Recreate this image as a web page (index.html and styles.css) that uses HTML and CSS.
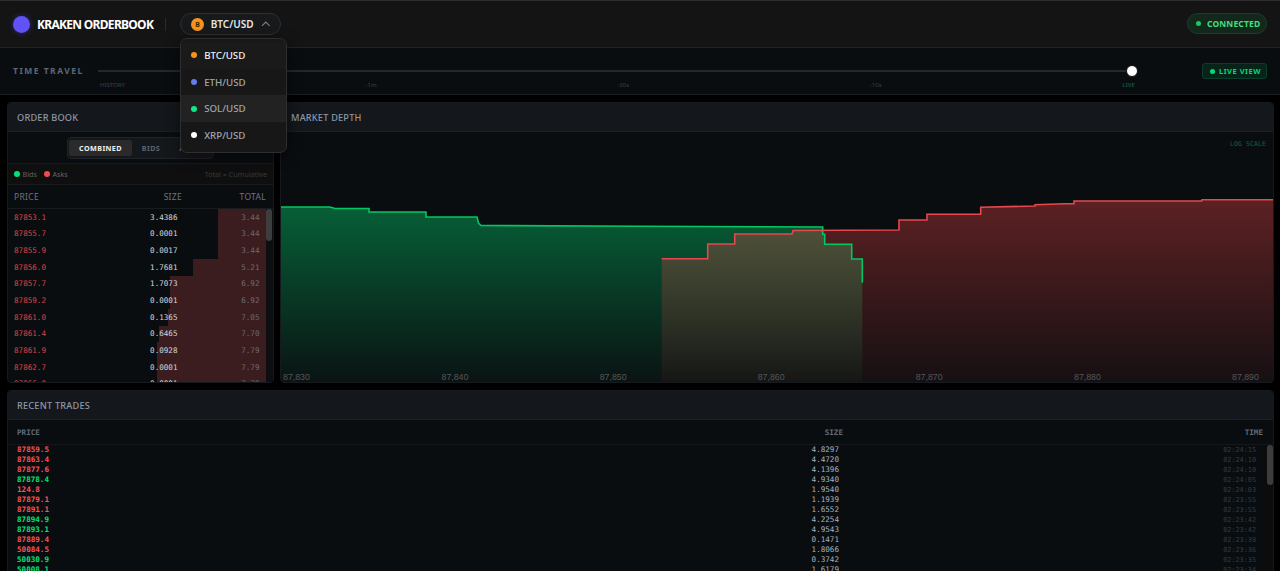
FILE: index.html
```html
<!DOCTYPE html>
<html lang="en">
<head>
<meta charset="utf-8">
<title>Kraken Orderbook</title>
<link rel="stylesheet" href="styles.css">
</head>
<body>
<header class="topbar">
  <div class="logo"></div>
  <div class="brand">KRAKEN ORDERBOOK</div>
  <div class="sep"></div>
  <div class="pair-wrap">
    <button class="pair">
      <span class="coin">B</span>
      <span class="pair-name">BTC/USD</span>
      <svg class="chev" width="10" height="6" viewBox="0 0 10 6"><path d="M1 5l4-4 4 4" fill="none" stroke="#7d8288" stroke-width="1.1"/></svg>
    </button>
    <div class="menu">
      <div class="menu-item first"><i class="mdot d-btc"></i>BTC/USD</div>
      <div class="menu-item"><i class="mdot d-eth"></i>ETH/USD</div>
      <div class="menu-item hover"><i class="mdot d-sol"></i>SOL/USD</div>
      <div class="menu-item"><i class="mdot d-xrp"></i>XRP/USD</div>
    </div>
  </div>
  <div class="status"><i class="status-dot"></i>CONNECTED</div>
</header>

<section class="timebar">
  <div class="tt-label">TIME TRAVEL</div>
  <div class="track-wrap">
    <div class="track"><span class="thumb"></span></div>
    <div class="ticks"><span>HISTORY</span><span>-1m</span><span>-30s</span><span>-10s</span><span class="tick-live">LIVE</span></div>
  </div>
  <div class="liveview"><i class="live-dot"></i>LIVE VIEW</div>
</section>

<main class="main">
  <div class="upper">
    <section class="panel book">
      <div class="panel-head">ORDER BOOK</div>
      <div class="toggle-row">
        <div class="toggle"><span class="tg active">COMBINED</span><span class="tg">BIDS</span><span class="tg">ASKS</span></div>
      </div>
      <div class="legend"><i class="ldot green"></i><span>Bids</span><i class="ldot red"></i><span>Asks</span><span class="legend-note">Total = Cumulative</span></div>
      <div class="book-head"><span>PRICE</span><span>SIZE</span><span>TOTAL</span></div>
      <div class="book-body">
        <div class="book-rows">
          <div class="brow"><i class="bar" style="width:18.6%"></i><span class="p">87853.1</span><span class="s">3.4386</span><span class="t">3.44</span></div>
          <div class="brow"><i class="bar" style="width:18.6%"></i><span class="p">87855.7</span><span class="s">0.0001</span><span class="t">3.44</span></div>
          <div class="brow"><i class="bar" style="width:18.6%"></i><span class="p">87855.9</span><span class="s">0.0017</span><span class="t">3.44</span></div>
          <div class="brow"><i class="bar" style="width:28.2%"></i><span class="p">87856.0</span><span class="s">1.7681</span><span class="t">5.21</span></div>
          <div class="brow"><i class="bar" style="width:37.2%"></i><span class="p">87857.7</span><span class="s">1.7073</span><span class="t">6.92</span></div>
          <div class="brow"><i class="bar" style="width:37.2%"></i><span class="p">87859.2</span><span class="s">0.0001</span><span class="t">6.92</span></div>
          <div class="brow"><i class="bar" style="width:38%"></i><span class="p">87861.0</span><span class="s">0.1365</span><span class="t">7.05</span></div>
          <div class="brow"><i class="bar" style="width:41.5%"></i><span class="p">87861.4</span><span class="s">0.6465</span><span class="t">7.70</span></div>
          <div class="brow"><i class="bar" style="width:42.2%"></i><span class="p">87861.9</span><span class="s">0.0928</span><span class="t">7.79</span></div>
          <div class="brow"><i class="bar" style="width:42.2%"></i><span class="p">87862.7</span><span class="s">0.0001</span><span class="t">7.79</span></div>
          <div class="brow"><i class="bar" style="width:42.2%"></i><span class="p">87866.0</span><span class="s">0.0001</span><span class="t">7.79</span></div>
        </div>
        <div class="rail book-rail"><i class="rail-thumb"></i></div>
      </div>
    </section>

    <section class="panel depth">
      <div class="panel-head">MARKET DEPTH</div>
      <div class="chart">
        <span class="log">LOG SCALE</span>
        <svg class="chart-svg" viewBox="281 132 992 251" width="992" height="251">
          <defs>
            <linearGradient id="gGreen" gradientUnits="userSpaceOnUse" x1="0" y1="205" x2="0" y2="383">
              <stop offset="0" stop-color="#00d26e" stop-opacity=".42"/>
              <stop offset="1" stop-color="#00d26e" stop-opacity=".03"/>
            </linearGradient>
            <linearGradient id="gRed" gradientUnits="userSpaceOnUse" x1="0" y1="200" x2="0" y2="383">
              <stop offset="0" stop-color="#ef4444" stop-opacity=".36"/>
              <stop offset="1" stop-color="#ef4444" stop-opacity=".05"/>
            </linearGradient>
          </defs>
          <path fill="url(#gGreen)" d="M281 207H330L335 208.500H369V212H426V217H477L478.500 223L481 225.500L640 226.200L822.700 227V234.300H824.700V244.300H851.700V259H862.300V383H281Z"/>
          <path fill="url(#gRed)" d="M661.700 258.700H707.700V244H734.700V234H792L793 230.500L899 230V220H927V214.300H980.700V207.300L1035 206V204.700L1065 203.700H1074V201H1201.700L1202 199.700H1273V383H661.700Z"/>
          <path class="line-green" d="M281 207H330L335 208.500H369V212H426V217H477L478.500 223L481 225.500L640 226.200L822.700 227V234.300H824.700V244.300H851.700V259H862.300V282.700"/>
          <path class="line-red" d="M661.700 258.700H707.700V244H734.700V234H792L793 230.500L899 230V220H927V214.300H980.700V207.300L1035 206V204.700L1065 203.700H1074V201H1201.700L1202 199.700H1273"/>
          <g class="axis">
            <text x="283" y="380">87,830</text>
            <text x="441.500" y="380">87,840</text>
            <text x="599.700" y="380">87,850</text>
            <text x="757.700" y="380">87,860</text>
            <text x="915.700" y="380">87,870</text>
            <text x="1074" y="380">87,880</text>
            <text x="1232" y="380">87,890</text>
          </g>
        </svg>
      </div>
    </section>
  </div>

  <section class="panel trades">
    <div class="panel-head trades-title">RECENT TRADES</div>
    <div class="trades-head"><span>PRICE</span><span>SIZE</span><span>TIME</span></div>
    <div class="trades-body">
      <div class="trade-rows">
        <div class="trow"><span class="sell">87859.5</span><span class="sz">4.8297</span><span class="tm">02:24:15</span></div>
        <div class="trow"><span class="sell">87863.4</span><span class="sz">4.4720</span><span class="tm">02:24:10</span></div>
        <div class="trow"><span class="sell">87877.6</span><span class="sz">4.1396</span><span class="tm">02:24:10</span></div>
        <div class="trow"><span class="buy">87878.4</span><span class="sz">4.9340</span><span class="tm">02:24:05</span></div>
        <div class="trow"><span class="sell">124.8</span><span class="sz">1.9540</span><span class="tm">02:24:03</span></div>
        <div class="trow"><span class="sell">87879.1</span><span class="sz">1.1939</span><span class="tm">02:23:55</span></div>
        <div class="trow"><span class="sell">87891.1</span><span class="sz">1.6552</span><span class="tm">02:23:55</span></div>
        <div class="trow"><span class="buy">87894.9</span><span class="sz">4.2254</span><span class="tm">02:23:42</span></div>
        <div class="trow"><span class="buy">87893.1</span><span class="sz">4.9543</span><span class="tm">02:23:42</span></div>
        <div class="trow"><span class="sell">87889.4</span><span class="sz">0.1471</span><span class="tm">02:23:39</span></div>
        <div class="trow"><span class="sell">50084.5</span><span class="sz">1.8066</span><span class="tm">02:23:36</span></div>
        <div class="trow"><span class="buy">50030.9</span><span class="sz">0.3742</span><span class="tm">02:23:35</span></div>
        <div class="trow"><span class="buy">50008.1</span><span class="sz">1.6179</span><span class="tm">02:23:34</span></div>
      </div>
      <div class="rail trades-rail"><i class="rail-thumb"></i></div>
    </div>
  </section>
</main>
</body>
</html>
```

FILE: styles.css
```css
* { box-sizing: border-box; margin: 0; padding: 0; }
html, body { height: 571px; overflow: hidden; }
body {
  background: #000;
  color: #fff;
  font-family: "Noto Sans", "Liberation Sans", sans-serif;
  display: flex;
  flex-direction: column;
}
i { display: block; font-style: normal; }

/* top bar */
.topbar {
  height: 48px;
  flex: none;
  display: flex;
  align-items: center;
  background: #141414;
  border-top: 1px solid #2e2e2e;
  border-bottom: 1px solid #232323;
  padding: 0 13px;
}
.logo {
  width: 17px;
  height: 17px;
  border-radius: 50%;
  background: #6052f5;
  box-shadow: 0 0 6px rgba(96, 82, 245, .35);
}
.brand {
  margin-left: 7px;
  font-size: 12px;
  font-weight: 700;
  letter-spacing: -.7px;
  color: #fff;
  white-space: nowrap;
}
.sep { width: 1px; height: 13px; background: #2a2a2a; margin-left: 12px; }
.pair-wrap { position: relative; margin-left: 14px; }
.pair {
  display: flex;
  align-items: center;
  width: 101px;
  height: 22px;
  padding: 0 10px;
  border: 1px solid #2c2f33;
  border-radius: 11px;
  background: #17191b;
  color: #e6e6e6;
  font: 600 10px "Noto Sans", sans-serif;
}
.coin {
  width: 13px;
  height: 13px;
  border-radius: 50%;
  background: #f7931a;
  color: #3a2200;
  font-size: 7px;
  font-weight: 700;
  line-height: 13px;
  text-align: center;
}
.pair-name { margin-left: 7px; }
.chev { margin-left: 7px; }
.menu {
  position: absolute;
  left: 0;
  top: 25px;
  width: 107px;
  height: 115px;
  padding-top: 3px;
  background: #171717;
  border: 1px solid #2e2e2e;
  border-radius: 7px;
  overflow: hidden;
  z-index: 5;
  box-shadow: 0 4px 14px rgba(0, 0, 0, .5);
}
.menu-item {
  height: 26.7px;
  display: flex;
  align-items: center;
  padding-left: 10px;
  gap: 7px;
  font-size: 9.7px;
  font-weight: 500;
  color: #a3a6aa;
}
.menu-item.first { color: #f2f2f2; background: #1a1a1a; }
.menu-item.hover { background: #222; }
.mdot { width: 6px; height: 6px; border-radius: 50%; }
.d-btc { background: #f7931a; }
.d-eth { background: #627eea; }
.d-sol { background: #14e58a; }
.d-xrp { background: #fff; }
.status {
  margin-left: auto;
  margin-bottom: 2px;
  height: 21px;
  width: 80px;
  display: flex;
  align-items: center;
  gap: 6px;
  padding-left: 8px;
  border: 1px solid #1d3f2b;
  border-radius: 11px;
  background: #12281b;
  color: #45dd80;
  font-size: 8.5px;
  font-weight: 700;
  letter-spacing: .15px;
}
.status-dot { width: 5px; height: 5px; border-radius: 50%; background: #22c55e; }

/* time travel */
.timebar {
  height: 47px;
  flex: none;
  display: flex;
  align-items: flex-start;
  background: #0a0d10;
  border-bottom: 1px solid #1c1f22;
  padding: 0 13px;
}
.tt-label {
  width: 85px;
  flex: none;
  margin-top: 17px;
  font-size: 8.5px;
  font-weight: 700;
  letter-spacing: 1.5px;
  line-height: 12px;
  color: #5c6675;
}
.track-wrap { width: 1038px; flex: none; padding-top: 22px; }
.track { height: 2px; width: 1035px; background: #25282b; position: relative; }
.thumb {
  position: absolute;
  right: -5px;
  top: -5px;
  width: 12px;
  height: 12px;
  border-radius: 50%;
  background: #fff;
  border: 1px solid #111;
}
.ticks {
  display: flex;
  justify-content: space-between;
  margin: 9px 1px 0 2px;
  font-size: 6px;
  line-height: 9px;
  color: #39414a;
}
.tick-live { color: #0e5a3a; font-weight: 600; }
.liveview {
  margin-left: auto;
  margin-top: 15px;
  width: 65px;
  height: 16px;
  flex: none;
  display: flex;
  align-items: center;
  gap: 4px;
  padding-left: 7px;
  border: 1px solid #0c3d28;
  border-radius: 3px;
  background: #07231a;
  color: #00dc74;
  font-size: 7.5px;
  font-weight: 700;
  letter-spacing: .5px;
  white-space: nowrap;
}
.live-dot { width: 5px; height: 5px; border-radius: 50%; background: #00dc74; }

/* main */
.main {
  flex: none;
  display: flex;
  flex-direction: column;
  gap: 7px;
  padding: 7px 6px 0 7px;
}
.upper { display: flex; gap: 6px; height: 281px; flex: none; }
.panel {
  background: #0a0d10;
  border: 1px solid #16191d;
  border-radius: 4px;
  overflow: hidden;
  display: flex;
  flex-direction: column;
}
.panel-head {
  height: 29px;
  flex: none;
  display: flex;
  align-items: center;
  padding-left: 9px;
  background: #14171b;
  border-bottom: 1px solid #1b1e22;
  font-size: 9.2px;
  font-weight: 500;
  letter-spacing: .2px;
  color: #8e98a6;
}
.trades-title { padding-top: 1px; }
.book { width: 267px; flex: none; }
.depth { width: 994px; flex: none; }
.depth .panel-head { padding-left: 10px; }

/* order book */
.toggle-row { height: 32px; flex: none; display: flex; justify-content: center; align-items: center; border-bottom: 1px solid #17191c; }
.toggle { display: flex; width: 147px; height: 22px; padding: 2px 1px 2px; background: #15181b; border: 1px solid #1f2226; border-radius: 4px; font-size: 7.2px; font-weight: 700; letter-spacing: .4px; color: #5b6571; }
.tg { display: flex; align-items: center; justify-content: center; width: 38px; }
.tg.active { width: 63px; background: #2b2b2b; color: #f0f0f0; border-radius: 3px; }
.legend {
  height: 21px;
  flex: none;
  display: flex;
  align-items: center;
  padding: 0 6px;
  background: #100f0f;
  border-bottom: 1px solid #191b1e;
  font-size: 7.2px;
  color: #596370;
}
.ldot { width: 6px; height: 6px; border-radius: 50%; margin-right: 2.5px; }
.ldot.green { background: #00e676; }
.ldot.red { background: #f04a4f; margin-left: 7px; }
.legend-note { margin-left: auto; color: #333a41; }
.book-head {
  height: 24px;
  flex: none;
  display: grid;
  grid-template-columns: 1fr 80px 84px;
  align-items: center;
  padding: 0 7px 0 6px;
  border-bottom: 1px solid #191c1f;
  font-size: 8.5px;
  letter-spacing: .3px;
  color: #6b7683;
}
.book-head span:nth-child(2), .book-head span:nth-child(3) { text-align: right; }
.book-body { display: flex; flex: 1; min-height: 0; }
.book-rows { flex: 1; min-width: 0; overflow: hidden; }
.brow {
  position: relative;
  height: 16.67px;
  display: grid;
  grid-template-columns: 1fr 70px 82px;
  align-items: center;
  padding: 0 6.5px 0 6px;
  font-family: "DejaVu Sans Mono", monospace;
  font-size: 7.6px;
}
.bar { position: absolute; right: 0; top: 0; bottom: 0; background: #3b1d20; }
.brow span { position: relative; }
.p { color: #d8444a; }
.s { color: #d3d6da; text-align: right; }
.t { color: #6d6a6d; text-align: right; }
.rail { width: 7px; flex: none; background: #0d0e10; }
.rail-thumb { width: 6px; background: #3d3d3d; border-radius: 3px; }
.book-rail .rail-thumb { height: 32px; }
.trades-rail { background: #0c0c0d; }
.trades-rail .rail-thumb { height: 40px; margin-left: 1px; }

/* chart */
.chart { flex: 1; position: relative; min-height: 0; }
.chart-svg { display: block; }
.log {
  position: absolute;
  right: 7px;
  top: 8px;
  font-family: "DejaVu Sans Mono", monospace;
  font-size: 6.5px;
  letter-spacing: .1px;
  color: #0f6443;
}
.line-green { fill: none; stroke: #00c864; stroke-width: 1.6; }
.line-red { fill: none; stroke: #e5484d; stroke-width: 1.6; }
.axis text { font-family: "Liberation Sans", sans-serif; font-size: 8.8px; fill: #555; }

/* trades */
.trades { height: 190px; flex: none; }
.trades-head {
  height: 25px;
  flex: none;
  display: grid;
  grid-template-columns: 1fr 60px 420px;
  align-items: center;
  padding: 1px 10px 0 9px;
  border-bottom: 1px solid #14171a;
  font-family: "DejaVu Sans Mono", monospace;
  font-size: 7.6px;
  font-weight: 700;
  color: #5f6b7a;
}
.trades-head span:nth-child(2), .trades-head span:nth-child(3) { text-align: right; }
.trades-body { display: flex; flex: 1; min-height: 0; }
.trade-rows { flex: 1; min-width: 0; }
.trow {
  height: 10px;
  display: grid;
  grid-template-columns: 1fr 60px 417px;
  align-items: center;
  padding: 0 10px 0 9px;
  font-family: "DejaVu Sans Mono", monospace;
  font-size: 7.6px;
  line-height: 10px;
}
.buy { color: #00e676; font-weight: 700; }
.sell { color: #ff5252; font-weight: 700; }
.sz { color: #a9b1ba; text-align: right; }
.tm { color: #343b44; text-align: right; font-size: 6.8px; }
```
